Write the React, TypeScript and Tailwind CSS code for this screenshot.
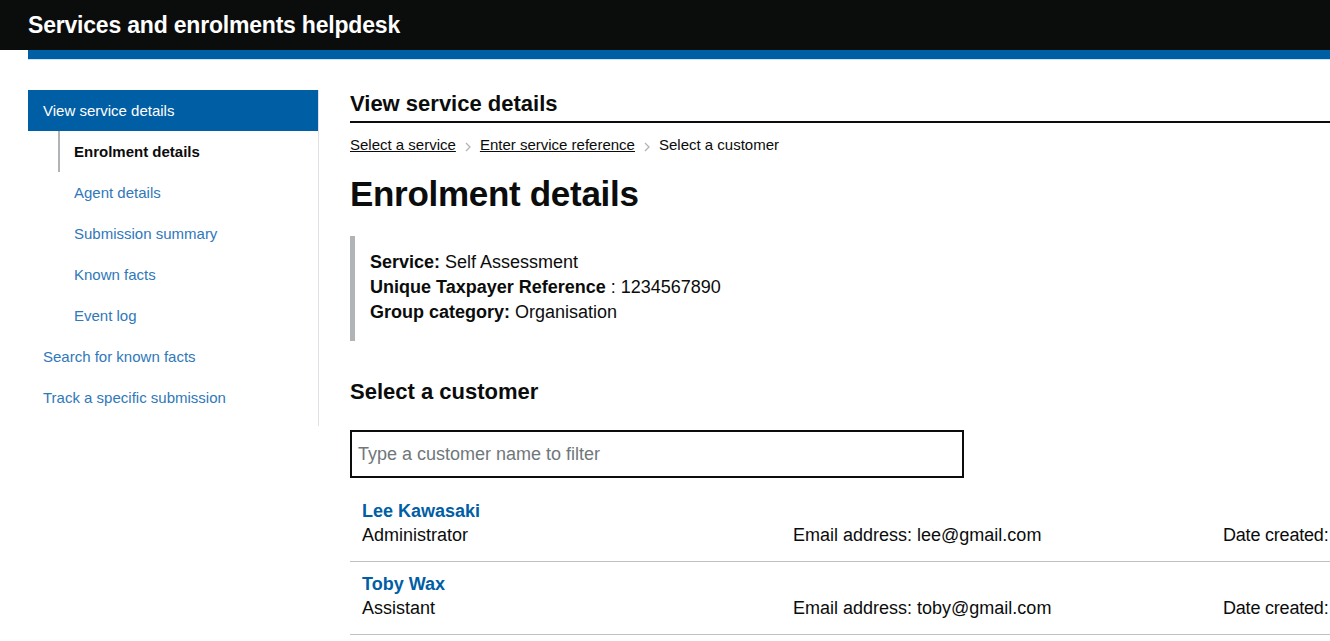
import React from "react";

const font = { fontFamily: '"Liberation Sans", Arial, sans-serif' };

const subNav = ["Agent details", "Submission summary", "Known facts", "Event log"];

const customers = [
  { name: "Lee Kawasaki", role: "Administrator", email: "lee@gmail.com" },
  { name: "Toby Wax", role: "Assistant", email: "toby@gmail.com" },
];

function Chevron() {
  return (
    <svg width="8" height="12" viewBox="0 0 8 12" className="mx-[8px] mt-[3px]">
      <path d="M2 2l4 4-4 4" fill="none" stroke="#b1b4b6" strokeWidth="1.3" />
    </svg>
  );
}

export default function App() {
  return (
    <div className="min-h-screen bg-white text-[#0b0c0c] overflow-hidden" style={font}>
      {/* Header */}
      <header>
        <div className="bg-[#0b0c0c] h-[50px] pl-[28px] flex items-center">
          <span className="text-white text-[23px] font-bold tracking-[-0.2px]">Services and enrolments helpdesk</span>
        </div>
        <div className="ml-[28px] h-[10px] bg-[#005ea5] border-b border-[#cfe0f0]" />
      </header>

      <div className="flex pl-[28px] pt-[30px]">
        {/* Sidebar */}
        <nav className="w-[291px] shrink-0">
          <div className="border-r border-[#dee0e2] pb-[8px]">
            <div className="bg-[#005ea5] h-[41px] flex items-center pl-[15px] pt-[1px] text-white text-[15px]">
              View service details
            </div>
            <div className="ml-[30px] border-l-2 border-[#b1b4b6] h-[41px] flex items-center pl-[14px] pt-[1px] text-[15px] font-bold">
              Enrolment details
            </div>
            {subNav.map((s) => (
              <div key={s} className="h-[41px] flex items-center pl-[46px] pt-[1px] text-[15px] text-[#2f78ba]">
                {s}
              </div>
            ))}
            <div className="h-[41px] flex items-center pl-[15px] pt-[1px] text-[15px] text-[#2f78ba]">Search for known facts</div>
            <div className="h-[41px] flex items-center pl-[15px] pt-[1px] text-[15px] text-[#2f78ba]">Track a specific submission</div>
          </div>
        </nav>

        {/* Main */}
        <main className="flex-1 pl-[31px] min-w-0">
          <div className="border-b-2 border-[#0b0c0c] pb-[3px]">
            <h2 className="text-[22px] font-bold leading-[28px]">View service details</h2>
          </div>
          <div className="flex items-center mt-[12px] text-[15px] leading-[20px]">
            <span className="underline">Select a service</span>
            <Chevron />
            <span className="underline">Enter service reference</span>
            <Chevron />
            <span>Select a customer</span>
          </div>
          <h1 className="mt-[17px] text-[35px] font-bold leading-[44px] tracking-[-0.3px]">Enrolment details</h1>

          <div className="mt-[20px] border-l-[5px] border-[#b1b4b6] pl-[15px] pt-[14px] pb-[16px] text-[18px] leading-[25px]">
            <div><b>Service:</b> Self Assessment</div>
            <div><b>Unique Taxpayer Reference</b> : 1234567890</div>
            <div><b>Group category:</b> Organisation</div>
          </div>

          <h2 className="mt-[36px] text-[22px] font-bold leading-[30px]">Select a customer</h2>
          <div className="mt-[23px] w-[614px] h-[48px] border-2 border-[#0b0c0c] flex items-center px-[6px] text-[18px] text-[#6f777b]">
            Type a customer name to filter
          </div>

          <div className="mt-[11px]">
            {customers.map((c) => (
              <div key={c.name} className="border-b border-[#bfc1c3] pl-[12px] pt-[10px] pb-[14px] text-[18px] leading-[24px]">
                <div className="font-bold text-[#005ea5]">{c.name}</div>
                <div className="flex whitespace-nowrap">
                  <span className="w-[431px] shrink-0">{c.role}</span>
                  <span className="w-[430px] shrink-0">Email address: {c.email}</span>
                  <span className="shrink-0 tracking-[-0.2px]">Date created:</span>
                </div>
              </div>
            ))}
          </div>
        </main>
      </div>
    </div>
  );
}
